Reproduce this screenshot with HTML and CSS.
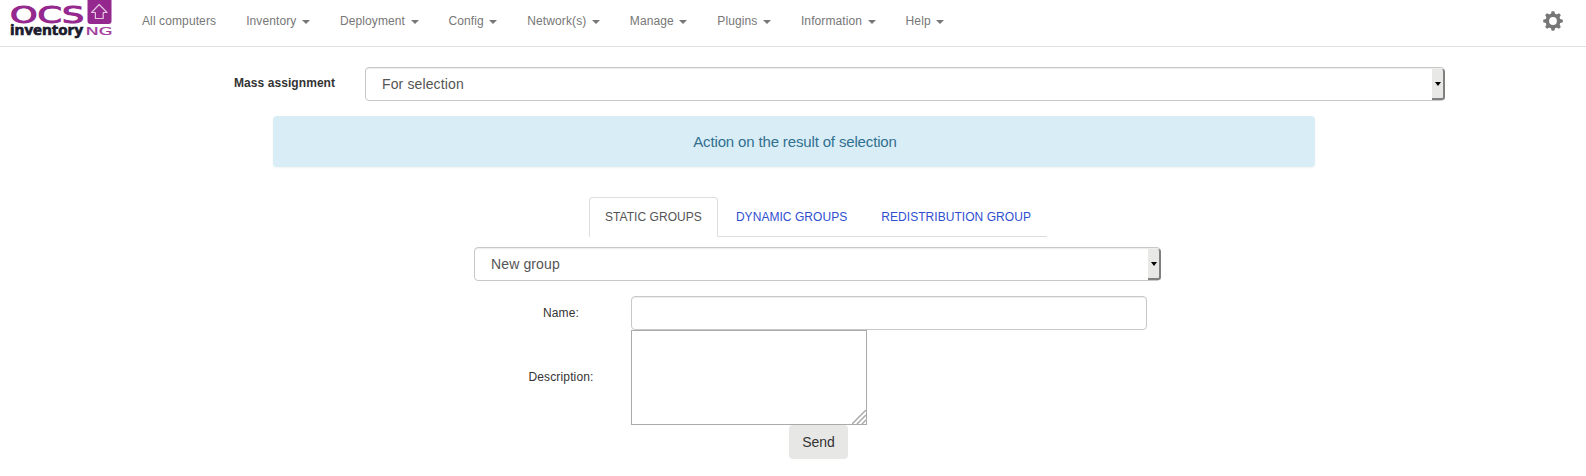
FILE: index.html
```html
<!DOCTYPE html>
<html lang="en">
<head>
<meta charset="utf-8">
<title>OCS Inventory</title>
<link rel="stylesheet" href="styles.css">
</head>
<body>
<header class="navbar">
  <a class="brand">
    <svg width="104" height="40" viewBox="0 0 104 40" aria-label="OCS inventory NG">
      <text class="logo-ocs" transform="translate(0 23) scale(1.3 1)" x="0" y="0" textLength="57" lengthAdjust="spacingAndGlyphs">OCS</text>
      <text class="logo-inventory" x="0" y="35" textLength="73" lengthAdjust="spacingAndGlyphs">inventory</text>
      <rect x="77.5" y="-4" width="24" height="28" rx="3" fill="#95288f"/>
      <path d="M89.2 4.5 L97 12.5 H93.2 V18.5 H85.4 V12.5 H81.6 Z" fill="none" stroke="#e4c4e2" stroke-width="1.2" stroke-linejoin="round"/>
      <text class="logo-ng" x="75.500" y="34.500" textLength="27" lengthAdjust="spacingAndGlyphs">NG</text>
    </svg>
  </a>
  <nav class="menu">
    <a class="item">All computers</a>
    <a class="item">Inventory <i class="caret"></i></a>
    <a class="item">Deployment <i class="caret"></i></a>
    <a class="item">Config <i class="caret"></i></a>
    <a class="item">Network(s) <i class="caret"></i></a>
    <a class="item">Manage <i class="caret"></i></a>
    <a class="item">Plugins <i class="caret"></i></a>
    <a class="item">Information <i class="caret"></i></a>
    <a class="item">Help <i class="caret"></i></a>
  </nav>
  <svg class="gear" width="20" height="20" viewBox="-10 -10 20 20">
    <g fill="#777">
      <path fill-rule="evenodd" d="M0 -7.500a7.500 7.500 0 1 0 0 15a7.500 7.500 0 1 0 0 -15zM0 -3.900a3.900 3.900 0 1 1 0 7.800a3.900 3.900 0 1 1 0 -7.800z"/>
      <path id="tooth" d="M-2.300 -6.500L-1.300 -9.800H1.300L2.300 -6.500z"/>
      <use href="#tooth" transform="rotate(45)"/>
      <use href="#tooth" transform="rotate(90)"/>
      <use href="#tooth" transform="rotate(135)"/>
      <use href="#tooth" transform="rotate(180)"/>
      <use href="#tooth" transform="rotate(225)"/>
      <use href="#tooth" transform="rotate(270)"/>
      <use href="#tooth" transform="rotate(315)"/>
    </g>
  </svg>
</header>
<main>
  <div class="assignment">
    <label class="assignment-label">Mass assignment</label>
    <div class="select select-wide"><span>For selection</span><b class="drop"></b></div>
  </div>
  <div class="alert">Action on the result of selection</div>
  <div class="tabs">
    <a class="tab active">STATIC GROUPS</a>
    <a class="tab">DYNAMIC GROUPS</a>
    <a class="tab">REDISTRIBUTION GROUP</a>
  </div>
  <div class="select select-group"><span>New group</span><b class="drop"></b></div>
  <div class="form">
    <label class="field-label">Name:</label>
    <div class="input"></div>
    <label class="field-label">Description:</label>
    <div class="textarea">
      <svg width="14" height="14" viewBox="0 0 14 14"><path d="M0 14L14 0M5 14L14 5M10 14L14 10" stroke="#aaa" stroke-width="1.500"/></svg>
    </div>
  </div>
  <button class="send">Send</button>
</main>
</body>
</html>
```

FILE: styles.css
```css
* { box-sizing: border-box; }
body {
  margin: 0;
  height: 476px;
  overflow: hidden;
  background: #fff;
  color: #333;
  font: 12px/17px "Liberation Sans", Arial, sans-serif;
}
.navbar {
  display: flex;
  height: 47px;
  padding: 0 23px 0 10px;
  border-bottom: 1px solid #e1e1e1;
}
.brand { width: 117px; }
.brand svg { display: block; }
.logo-ocs { font: 23px "DejaVu Sans", sans-serif; fill: #95288f; stroke: #95288f; stroke-width: 1px; }
.logo-inventory { font: bold 14.5px "Open Sans", sans-serif; fill: #1b1b2d; stroke: #1b1b2d; stroke-width: 0.7px; }
.logo-ng { font: 10px "DejaVu Sans", sans-serif; fill: #a03a9a; stroke: #a03a9a; stroke-width: 0.2px; }
.menu { display: flex; flex: 1; letter-spacing: 0.11px; }
.item { padding: 13px 15px 0; color: #777; white-space: nowrap; }
.caret {
  display: inline-block;
  margin-left: 2px;
  vertical-align: middle;
  border-top: 4px solid #777;
  border-right: 4px solid transparent;
  border-left: 4px solid transparent;
}
.gear { margin-top: 11px; }
.assignment {
  display: flex;
  align-items: flex-start;
  padding: 20px 0 0 234px;
}
.assignment-label { width: 131px; padding-top: 8px; font-weight: bold; letter-spacing: 0.07px; }
.select {
  display: flex;
  justify-content: space-between;
  height: 34px;
  border: 1px solid #c8c8c8;
  border-radius: 4px;
  box-shadow: inset 0 1px 1px rgba(0, 0, 0, 0.075);
  color: #555;
  font-size: 14px;
  line-height: 32px;
  padding-left: 16px;
  letter-spacing: 0.13px;
}
.select-wide { width: 1080px; }
.select-group { width: 687px; margin: 10px 0 0 474px; }
.drop {
  display: flex;
  align-items: center;
  justify-content: center;
  width: 13px;
  margin: 1px -1px 0 0;
  background: #e8e8e7;
  border-right: 2px solid #808080;
  border-bottom: 2px solid #808080;
  border-radius: 0 3px 3px 0;
}
.drop::after {
  content: "";
  border-top: 4px solid #000;
  border-right: 3.5px solid transparent;
  border-left: 3.5px solid transparent;
}
.alert {
  width: 1042px;
  height: 51px;
  margin: 15px 0 0 273px;
  border-radius: 4px;
  background: #d9edf7;
  color: #31708f;
  font-size: 15px;
  line-height: 52px;
  text-align: center;
  padding-left: 2px;
  letter-spacing: -0.15px;
  box-shadow: 0 1px 2px rgba(0, 0, 0, 0.05);
}
.tabs {
  display: flex;
  width: 458px;
  height: 40px;
  margin: 30px 0 0 589px;
  border-bottom: 1px solid #ddd;
  letter-spacing: 0.05px;
}
.tab {
  height: 39px;
  margin-right: 2px;
  padding: 11px 15px 0;
  border: 1px solid transparent;
  color: #2f4fd0;
  white-space: nowrap;
}
.tab.active {
  height: 40px;
  border-color: #ddd;
  border-bottom-color: #fff;
  border-radius: 4px 4px 0 0;
  background: #fff;
  color: #555;
}
.form {
  display: grid;
  grid-template-columns: 140px 516px;
  align-items: center;
  margin: 15px 0 0 491px;
}
.field-label { text-align: center; letter-spacing: 0.15px; }
.input {
  height: 34px;
  border: 1px solid #c8c8c8;
  border-radius: 4px;
  box-shadow: inset 0 1px 1px rgba(0, 0, 0, 0.075);
}
.textarea {
  display: flex;
  align-items: flex-end;
  justify-content: flex-end;
  width: 236px;
  height: 95px;
  border: 1px solid #aaa;
}
.send {
  display: block;
  width: 59px;
  height: 34px;
  margin-left: 789px;
  padding: 0;
  border: 0;
  border-radius: 4px;
  background: #e7e7e6;
  color: #333;
  font: 14px "Liberation Sans", Arial, sans-serif;
}
```
